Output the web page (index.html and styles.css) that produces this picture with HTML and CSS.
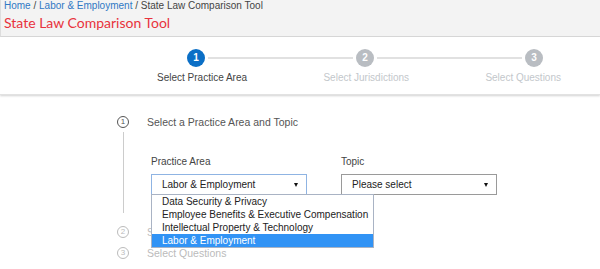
FILE: index.html
```html
<!doctype html>
<html lang="en">

<head>
    <meta charset="UTF-8" />
    <title>State Law Comparison Tool</title>
    <link rel="stylesheet" href="styles.css">
</head>

<body>
    <header class="header">
        <nav class="crumbs">
            <a class="link" href="#">Home</a> / <a class="link" href="#">Labor &amp; Employment</a> / State Law Comparison Tool
        </nav>
        <h1 class="heading">State Law Comparison Tool</h1>
    </header>

    <div class="stepper">
        <div class="stepper__dots">
            <span class="dot dot--active">1</span>
            <span class="stepper__line"></span>
            <span class="dot">2</span>
            <span class="stepper__line"></span>
            <span class="dot">3</span>
        </div>
        <div class="stepper__labels">
            <span class="stepper__label stepper__label--active">Select Practice Area</span>
            <span class="stepper__label">Select Jurisdictions</span>
            <span class="stepper__label">Select Questions</span>
        </div>
    </div>

    <main class="content">
        <section class="step">
            <span class="step__num">1</span>
            <h2 class="step__title">Select a Practice Area and Topic</h2>
            <span class="step__rail"></span>
            <div class="step__body">
                <div class="field">
                    <label class="field__label">Practice Area</label>
                    <div class="select select--focus">
                        <span>Labor &amp; Employment</span>
                        <span class="caret"></span>
                        <ul class="options">
                            <li class="option">Data Security &amp; Privacy</li>
                            <li class="option">Employee Benefits &amp; Executive Compensation</li>
                            <li class="option">Intellectual Property &amp; Technology</li>
                            <li class="option option--selected">Labor &amp; Employment</li>
                        </ul>
                    </div>
                </div>
                <div class="field">
                    <label class="field__label">Topic</label>
                    <div class="select">
                        <span>Please select</span>
                        <span class="caret"></span>
                    </div>
                </div>
            </div>
        </section>
        <section class="step step--todo">
            <span class="step__num">2</span>
            <h2 class="step__title">Select Jurisdictions</h2>
        </section>
        <section class="step step--todo">
            <span class="step__num">3</span>
            <h2 class="step__title">Select Questions</h2>
        </section>
    </main>
</body>

</html>
```

FILE: styles.css
```css
:root {
    --accent-blue: #0b6fc6;
    --link-blue: #2f78c4;
    --title-red: #e8323c;
    --text-color: #333;
    --muted: #b9bdc2;
}

* {
    margin: 0;
    padding: 0;
    box-sizing: border-box;
}

body {
    font-family: 'Liberation Sans', Arial, sans-serif;
    font-size: 10px;
    color: var(--text-color);
    background: white;
    width: 600px;
    height: 269px;
    overflow: hidden;
}

.header {
    height: 37px;
    padding: 0 3px;
    background: #f3f3f3;
    border-left: 1px solid #ddd;
    border-bottom: 1px solid #d9d9d9;
}

.crumbs {
    font-size: 10px;
    line-height: 12px;
    color: #444;
}

.link {
    color: var(--link-blue);
    text-decoration: none;
}

.heading {
    font-family: Lato, 'Liberation Sans', sans-serif;
    font-weight: normal;
    font-size: 14px;
    line-height: 20px;
    margin-top: 1px;
    color: var(--title-red);
}

.stepper {
    padding: 12px 0 10px;
    background: white;
    box-shadow: 0 1px 2px rgba(0, 0, 0, 0.18);
    border-bottom: 1px solid #e2e2e2;
}

.stepper__dots {
    display: flex;
    align-items: center;
    margin: 0 57px 0 187px;
}

.dot {
    width: 18px;
    height: 18px;
    border-radius: 50%;
    background: var(--muted);
    color: white;
    font-weight: bold;
    font-size: 10px;
    line-height: 18px;
    text-align: center;
}

.dot--active {
    background: var(--accent-blue);
}

.stepper__line {
    flex: 1;
    height: 2px;
    margin: 0 3px;
    background: #e1e1e1;
}

.stepper__labels {
    display: flex;
    justify-content: space-between;
    margin: 5px 39px 0 157px;
    line-height: 12px;
}

.stepper__label {
    color: #c3c7cb;
}

.stepper__label--active {
    color: #444;
}

.content {
    padding: 21px 0 0 117px;
}

.step {
    display: grid;
    grid-template-columns: 12px 1fr;
    column-gap: 18px;
    align-items: center;
}

.step + .step {
    margin-top: 9px;
}

.step__num {
    width: 12px;
    height: 12px;
    border: 1px solid #555;
    border-radius: 50%;
    font-size: 8px;
    line-height: 10px;
    text-align: center;
    color: #555;
}

.step__title {
    font-size: 10.5px;
    font-weight: normal;
    line-height: 12px;
    color: #555;
}

.step__rail {
    align-self: stretch;
    justify-self: center;
    width: 1px;
    margin: 4px 0 4px;
    background: #ccc;
}

.step__body {
    display: flex;
    gap: 34px;
    padding: 28px 0 22px 4px;
}

.step--todo .step__num {
    border-color: #bbb;
    color: #bbb;
}

.step--todo .step__title {
    color: #bbb;
}

.field__label {
    display: block;
    line-height: 12px;
    margin-bottom: 6px;
    color: #444;
}

.select {
    position: relative;
    display: flex;
    align-items: center;
    justify-content: space-between;
    width: 156px;
    height: 21px;
    padding: 0 8px 0 10px;
    border: 1px solid #9a9a9a;
    color: #222;
    background: white;
}

.select--focus {
    border-color: #8fb4e3;
}

.caret {
    width: 0;
    height: 0;
    border-left: 2.5px solid transparent;
    border-right: 2.5px solid transparent;
    border-top: 4px solid #111;
}

.options {
    position: absolute;
    top: 100%;
    left: -1px;
    width: 223px;
    list-style: none;
    background: white;
    border: 1px solid #a9b3c4;
    z-index: 2;
}

.option {
    height: 13px;
    line-height: 13px;
    padding-left: 10px;
    white-space: nowrap;
    color: #222;
}

.option--selected {
    background: #3193f5;
    color: white;
}
```
